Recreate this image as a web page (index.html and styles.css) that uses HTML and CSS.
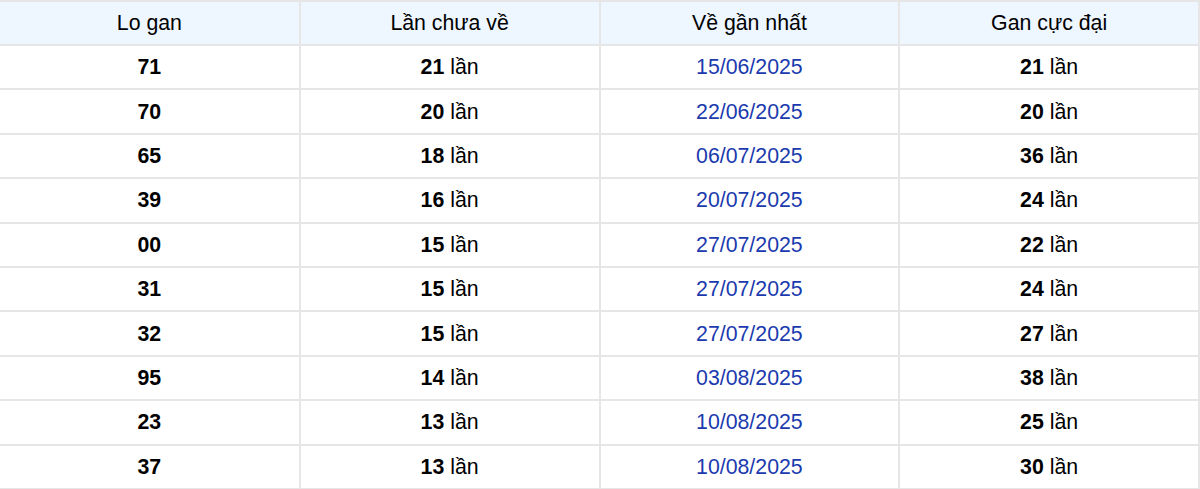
FILE: index.html
```html
<!DOCTYPE html>
<html lang="vi">
<head>
<meta charset="utf-8">
<title>Lo gan</title>
<link rel="stylesheet" href="styles.css">
</head>
<body>
<table class="gan-table">
  <thead>
    <tr><th>Lo gan</th><th>Lần chưa về</th><th>Về gần nhất</th><th>Gan cực đại</th></tr>
  </thead>
  <tbody>
    <tr><td class="num">71</td><td><b>21</b> lần</td><td class="date">15/06/2025</td><td><b>21</b> lần</td></tr>
    <tr><td class="num">70</td><td><b>20</b> lần</td><td class="date">22/06/2025</td><td><b>20</b> lần</td></tr>
    <tr><td class="num">65</td><td><b>18</b> lần</td><td class="date">06/07/2025</td><td><b>36</b> lần</td></tr>
    <tr><td class="num">39</td><td><b>16</b> lần</td><td class="date">20/07/2025</td><td><b>24</b> lần</td></tr>
    <tr><td class="num">00</td><td><b>15</b> lần</td><td class="date">27/07/2025</td><td><b>22</b> lần</td></tr>
    <tr><td class="num">31</td><td><b>15</b> lần</td><td class="date">27/07/2025</td><td><b>24</b> lần</td></tr>
    <tr><td class="num">32</td><td><b>15</b> lần</td><td class="date">27/07/2025</td><td><b>27</b> lần</td></tr>
    <tr><td class="num">95</td><td><b>14</b> lần</td><td class="date">03/08/2025</td><td><b>38</b> lần</td></tr>
    <tr><td class="num">23</td><td><b>13</b> lần</td><td class="date">10/08/2025</td><td><b>25</b> lần</td></tr>
    <tr><td class="num">37</td><td><b>13</b> lần</td><td class="date">10/08/2025</td><td><b>30</b> lần</td></tr>
  </tbody>
</table>
</body>
</html>
```
FILE: styles.css
```css
html, body {
  margin: 0;
  padding: 0;
  background: #ffffff;
}
body {
  font-family: "Liberation Sans", Arial, sans-serif;
  font-size: 21.3px;
  color: #000000;
}
.gan-table {
  width: 1200px;
  border-collapse: collapse;
  table-layout: fixed;
}
.gan-table th,
.gan-table td {
  height: 42.4px;
  padding: 0;
  text-align: center;
  vertical-align: middle;
  border: 2px solid #e6e6e6;
  line-height: 24px;
}
.gan-table th:first-child,
.gan-table td:first-child {
  border-left: 0;
}
.gan-table th {
  background: #eef6ff;
  font-weight: normal;
  height: 42px;
}
.gan-table td.num,
.gan-table b {
  font-weight: bold;
}
.gan-table td.date {
  color: #1a3aae;
}
```
